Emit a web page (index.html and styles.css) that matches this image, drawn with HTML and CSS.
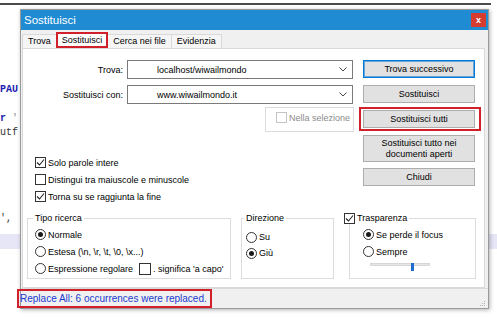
FILE: index.html
```html
<!DOCTYPE html>
<html lang="it">
<head>
    <meta charset="UTF-8">
    <meta name="viewport" content="width=device-width, initial-scale=1.0">
    <title>Sostituisci</title>
    <link rel="stylesheet" href="styles.css">
</head>
<body>
    <!-- editor text behind the dialog -->
    <div class="editor">
        <div class="code line-pause"><span class="kw">PAU</span></div>
        <div class="code line-r"><span class="kw">r</span> <span class="quote">'</span></div>
        <div class="code line-utf">utf</div>
        <div class="code line-comma">',</div>
        <div class="current-line"></div>
    </div>

    <div class="dialog">
        <div class="titlebar">
            <span class="title">Sostituisci</span>
            <span class="close">x</span>
        </div>

        <div class="tabs">
            <span class="tab">Trova</span>
            <span class="tab active">Sostituisci</span>
            <span class="tab">Cerca nei file</span>
            <span class="tab">Evidenzia</span>
        </div>

        <div class="panel">
            <div class="top">
                <div class="left">
                    <div class="field-row">
                        <label class="field-label">Trova:</label>
                        <div class="combo">
                            <span>localhost/wiwailmondo</span>
                            <svg class="chevron" width="8" height="5" viewBox="0 0 8 5"><polyline points="0.5,0.5 4,4 7.5,0.5" fill="none" stroke="#444" stroke-width="1"/></svg>
                        </div>
                    </div>
                    <div class="field-row">
                        <label class="field-label">Sostituisci con:</label>
                        <div class="combo">
                            <span>www.wiwailmondo.it</span>
                            <svg class="chevron" width="8" height="5" viewBox="0 0 8 5"><polyline points="0.5,0.5 4,4 7.5,0.5" fill="none" stroke="#444" stroke-width="1"/></svg>
                        </div>
                    </div>

                    <div class="selection">
                        <span class="check disabled"></span>
                        <span>Nella selezione</span>
                    </div>

                    <div class="options">
                        <div class="check-row">
                            <span class="check"><svg width="9" height="9" viewBox="0 0 9 9"><polyline points="1,4.5 3.5,7 8,1.5" fill="none" stroke="#222" stroke-width="1.1"/></svg></span>
                            <span>Solo parole intere</span>
                        </div>
                        <div class="check-row">
                            <span class="check"></span>
                            <span>Distingui tra maiuscole e minuscole</span>
                        </div>
                        <div class="check-row">
                            <span class="check"><svg width="9" height="9" viewBox="0 0 9 9"><polyline points="1,4.5 3.5,7 8,1.5" fill="none" stroke="#222" stroke-width="1.1"/></svg></span>
                            <span>Torna su se raggiunta la fine</span>
                        </div>
                    </div>
                </div>

                <div class="right">
                    <button class="btn default">Trova successivo</button>
                    <button class="btn">Sostituisci</button>
                    <button class="btn marked">Sostituisci tutti</button>
                    <button class="btn tall">Sostituisci tutto nei<br>documenti aperti</button>
                    <button class="btn">Chiudi</button>
                </div>
            </div>

            <div class="groups">
                <div class="group group-type">
                    <div class="group-title">Tipo ricerca</div>
                    <div class="radio-list">
                        <div class="radio-row"><span class="radio on"></span><span>Normale</span></div>
                        <div class="radio-row"><span class="radio"></span><span>Estesa (\n, \r, \t, \0, \x...)</span></div>
                        <div class="radio-row">
                            <span class="radio"></span><span>Espressione regolare</span>
                            <span class="check inline-check"></span><span>. significa 'a capo'</span>
                        </div>
                    </div>
                </div>

                <div class="group group-dir">
                    <div class="group-title">Direzione</div>
                    <div class="radio-list">
                        <div class="radio-row"><span class="radio"></span><span>Su</span></div>
                        <div class="radio-row"><span class="radio on"></span><span>Giù</span></div>
                    </div>
                </div>

                <div class="group group-trans">
                    <div class="group-title">
                        <span class="check"><svg width="9" height="9" viewBox="0 0 9 9"><polyline points="1,4.5 3.5,7 8,1.5" fill="none" stroke="#222" stroke-width="1.1"/></svg></span>
                        <span>Trasparenza</span>
                    </div>
                    <div class="radio-list">
                        <div class="radio-row"><span class="radio on"></span><span>Se perde il focus</span></div>
                        <div class="radio-row"><span class="radio"></span><span>Sempre</span></div>
                    </div>
                    <div class="slider">
                        <div class="slider-track"></div>
                        <div class="slider-thumb"></div>
                    </div>
                </div>
            </div>
        </div>

        <div class="statusbar">
            <span class="status-msg">Replace All: 6 occurrences were replaced.</span>
            <svg class="grip" width="6" height="6" viewBox="0 0 6 6">
                <rect x="4" y="0" width="1" height="1" fill="#b5b5b5"/>
                <rect x="2" y="2" width="1" height="1" fill="#b5b5b5"/>
                <rect x="4" y="2" width="1" height="1" fill="#b5b5b5"/>
                <rect x="0" y="4" width="1" height="1" fill="#b5b5b5"/>
                <rect x="2" y="4" width="1" height="1" fill="#b5b5b5"/>
                <rect x="4" y="4" width="1" height="1" fill="#b5b5b5"/>
            </svg>
        </div>
    </div>
</body>
</html>
```

FILE: styles.css
```css
/* General */
* {
    box-sizing: border-box;
}

body {
    margin: 0;
    width: 497px;
    height: 317px;
    overflow: hidden;
    position: relative;
    background-color: #ffffff;
    font-family: "Liberation Sans", Arial, sans-serif;
    font-size: 9px;
    color: #000;
}

/* Editor in the background */
.editor {
    width: 491px;
    height: 100%;
    margin-top: 3px;
    border-top: 2px solid #4a4a4a;
    font-family: "Liberation Mono", monospace;
    font-size: 10px;
    line-height: 14px;
}

.code {
    height: 14px;
    white-space: pre;
    color: #333;
}

.kw {
    color: #1c1cb0;
    font-weight: bold;
}

.quote {
    color: #888;
}

.line-pause {
    margin-top: 78px;
}

.line-r {
    margin-top: 15px;
}

.line-comma {
    margin-top: 72px;
}

.current-line {
    margin-top: 8px;
    width: 497px;
    height: 15px;
    background-color: #e6e6f7;
}

/* Dialog window */
.dialog {
    position: absolute;
    left: 20px;
    top: 9px;
    width: 469px;
    height: 300px;
    background-color: #f0f0f0;
    border: 1px solid #9a9a9a;
    box-shadow: 1px 1px 4px rgba(0, 0, 0, 0.3);
    display: flex;
    flex-direction: column;
}

.titlebar {
    height: 20px;
    background-color: #1f8bd3;
    display: flex;
    align-items: center;
    justify-content: space-between;
    padding: 0 2px 0 3px;
}

.title {
    color: #fff;
    font-size: 11.5px;
}

.close {
    width: 15px;
    height: 14px;
    background-color: #d63b2f;
    color: #fff;
    font-weight: bold;
    font-size: 9px;
    display: flex;
    align-items: center;
    justify-content: center;
}

/* Tabs */
.tabs {
    display: flex;
    align-items: flex-end;
    height: 16px;
    margin-top: 2px;
    padding-left: 1px;
}

.tab {
    height: 14px;
    line-height: 13px;
    padding: 0 5px;
    border: 1px solid #d9d9d9;
    border-bottom: none;
    background-color: #f5f5f5;
    margin-right: -1px;
}

.tab.active {
    height: 16px;
    line-height: 13px;
    background-color: #fff;
    border: 2px solid #d0202a;
    border-bottom: 2px solid #d0202a;
    padding: 0 4px;
    position: relative;
    z-index: 1;
}

/* Main panel */
.panel {
    height: 240px;
    margin: 0 3px 0 1px;
    background-color: #fff;
    border: 1px solid #d9d9d9;
    padding-top: 11px;
}

.top {
    display: flex;
}

.left {
    width: 340px;
}

.field-row {
    display: flex;
    align-items: center;
    height: 19px;
}

.field-row + .field-row {
    margin-top: 6px;
}

.field-label {
    width: 100px;
    margin-right: 4px;
    text-align: right;
}

.combo {
    width: 226px;
    height: 19px;
    border: 1px solid #7a7a7a;
    background-color: #fff;
    display: flex;
    align-items: center;
    padding: 0 5px 0 29px;
}

.chevron {
    margin-left: auto;
}

.selection {
    width: 89px;
    height: 25px;
    margin: 3px 0 0 242px;
    border: 1px solid #dcdcdc;
    display: flex;
    align-items: center;
    align-self: flex-start;
    padding: 0 0 4px 10px;
    gap: 2px;
    color: #8c8c8c;
}

.options {
    margin: 22px 0 0 12px;
}

.check-row {
    display: flex;
    align-items: center;
    height: 17px;
    gap: 2px;
}

/* Checkbox and radio */
.check {
    flex: none;
    width: 11px;
    height: 11px;
    border: 1px solid #333;
    background-color: #fff;
    display: flex;
    align-items: center;
    justify-content: center;
}

.check.disabled {
    border-color: #c4c4c4;
}

.radio {
    flex: none;
    width: 11px;
    height: 11px;
    border: 1px solid #333;
    border-radius: 50%;
    background-color: #fff;
    display: flex;
    align-items: center;
    justify-content: center;
}

.radio.on::after {
    content: "";
    width: 5px;
    height: 5px;
    border-radius: 50%;
    background-color: #1a1a1a;
}

/* Buttons */
.right {
    width: 112px;
}

.btn {
    display: block;
    width: 112px;
    height: 18px;
    margin: 0 0 7px 0;
    padding: 0;
    font-family: inherit;
    font-size: 9px;
    color: #000;
    background-color: #e1e1e1;
    border: 1px solid #adadad;
    line-height: 11px;
}

.btn.default {
    border-color: #0078d7;
    box-shadow: inset 0 0 0 1px rgba(0, 120, 215, 0.55);
}

.btn.tall {
    height: 27px;
    margin-bottom: 6px;
}

.btn.marked {
    position: relative;
}

.btn.marked::after {
    content: "";
    position: absolute;
    top: -4px;
    bottom: -4px;
    left: -5px;
    right: -7px;
    border: 2px solid #d0202a;
}

/* Group boxes */
.groups {
    display: flex;
    margin-top: 13px;
    padding-left: 4px;
}

.group {
    height: 61px;
    border: 1px solid #dcdcdc;
}

.group-type {
    width: 204px;
}

.group-dir {
    width: 93px;
    margin-left: 10px;
}

.group-trans {
    width: 127px;
    margin-left: 15px;
}

.group-title {
    display: flex;
    align-items: center;
    gap: 2px;
    width: fit-content;
    height: 12px;
    line-height: 12px;
    margin: -7px 0 0 5px;
    padding: 0 2px;
    background-color: #fff;
}

.group-dir .group-title {
    margin-left: 2px;
}

.group-trans .group-title {
    margin-left: -6px;
    padding-left: 0;
}

.radio-list {
    padding-top: 2px;
}

.radio-row {
    display: flex;
    align-items: center;
    height: 17px;
    gap: 2px;
}

.group-type .radio-row {
    padding-left: 7px;
}

.group-dir .radio-list {
    padding-top: 5px;
}

.group-dir .radio-row {
    height: 16px;
    padding-left: 4px;
}

.group-trans .radio-row {
    padding-left: 13px;
}

.inline-check {
    width: 12px;
    height: 12px;
    margin-left: 4px;
}

.slider {
    position: relative;
    width: 60px;
    height: 8px;
    margin: 3px 0 0 20px;
}

.slider-track {
    height: 3px;
    margin-top: 3px;
    background-color: #e7e7e7;
    border: 1px solid #d6d6d6;
}

.slider-thumb {
    position: absolute;
    left: 41px;
    top: 0;
    width: 3px;
    height: 8px;
    background-color: #1c6fd1;
}

/* Status bar */
.statusbar {
    height: 20px;
    border-top: 1px solid #dadada;
    display: flex;
    justify-content: space-between;
    align-items: flex-start;
}

.status-msg {
    margin-left: -4px;
    padding: 0 3px 0 1px;
    border: 2px solid #d0202a;
    line-height: 15px;
    font-size: 10px;
    color: #1b3bd0;
    position: relative;
    z-index: 1;
}

.grip {
    margin: 12px 2px 0 0;
}
```
